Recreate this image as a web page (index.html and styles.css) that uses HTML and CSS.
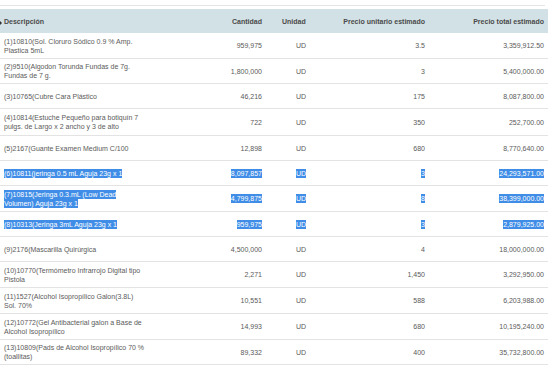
FILE: index.html
```html
<!DOCTYPE html>
<html lang="es">
<head>
<meta charset="utf-8">
<title>Tabla</title>
<link rel="stylesheet" href="styles.css">
</head>
<body>
<div class="wrap">
  <div class="topline"></div>
  <table class="grid">
    <colgroup>
      <col class="c-desc"><col class="c-cant"><col class="c-unid"><col class="c-pu"><col class="c-pt">
    </colgroup>
    <thead>
      <tr>
        <th class="desc"><span class="mark"></span>Descripción</th>
        <th class="num">Cantidad</th>
        <th class="unid">Unidad</th>
        <th class="num">Precio unitario estimado</th>
        <th class="num">Precio total estimado</th>
      </tr>
    </thead>
    <tbody>
      <tr class="h25"><td class="desc"><div class="dtext">(1)10810(Sol. Cloruro Sódico 0.9 % Amp. Plastica 5mL</div></td><td class="num">959,975</td><td class="unid">UD</td><td class="num">3.5</td><td class="num">3,359,912.50</td></tr>
      <tr><td class="desc"><div class="dtext">(2)9510(Algodon Torunda Fundas de 7g. Fundas de 7 g.</div></td><td class="num">1,800,000</td><td class="unid">UD</td><td class="num">3</td><td class="num">5,400,000.00</td></tr>
      <tr><td class="desc"><div class="dtext">(3)10765(Cubre Cara Plástico</div></td><td class="num">46,216</td><td class="unid">UD</td><td class="num">175</td><td class="num">8,087,800.00</td></tr>
      <tr class="h26"><td class="desc"><div class="dtext">(4)10814(Estuche Pequeño para botiquín 7 pulgs. de Largo x 2 ancho y 3 de alto</div></td><td class="num">722</td><td class="unid">UD</td><td class="num">350</td><td class="num">252,700.00</td></tr>
      <tr><td class="desc"><div class="dtext">(5)2167(Guante Examen Medium C/100</div></td><td class="num">12,898</td><td class="unid">UD</td><td class="num">680</td><td class="num">8,770,640.00</td></tr>
      <tr><td class="desc"><div class="dtext"><span class="hl">(6)10811(jeringa 0.5 mL Aguja 23g x 1</span></div></td><td class="num"><span class="hl">8,097,857</span></td><td class="unid"><span class="hl">UD</span></td><td class="num"><span class="hl">3</span></td><td class="num"><span class="hl">24,293,571.00</span></td></tr>
      <tr class="h25"><td class="desc"><div class="dtext"><span class="hl">(7)10815(Jeringa 0.3.mL (Low Dead Volumen) Aguja 23g x 1</span></div></td><td class="num"><span class="hl">4,799,875</span></td><td class="unid"><span class="hl">UD</span></td><td class="num"><span class="hl">8</span></td><td class="num"><span class="hl">38,399,000.00</span></td></tr>
      <tr><td class="desc"><div class="dtext"><span class="hl">(8)10313(Jeringa 3mL Aguja 23g x 1</span></div></td><td class="num"><span class="hl">959,975</span></td><td class="unid"><span class="hl">UD</span></td><td class="num"><span class="hl">3</span></td><td class="num"><span class="hl">2,879,925.00</span></td></tr>
      <tr><td class="desc"><div class="dtext">(9)2176(Mascarilla Quirúrgica</div></td><td class="num">4,500,000</td><td class="unid">UD</td><td class="num">4</td><td class="num">18,000,000.00</td></tr>
      <tr class="h25"><td class="desc"><div class="dtext">(10)10770(Termómetro Infrarrojo Digital tipo Pistola</div></td><td class="num">2,271</td><td class="unid">UD</td><td class="num">1,450</td><td class="num">3,292,950.00</td></tr>
      <tr class="h25"><td class="desc"><div class="dtext">(11)1527(Alcohol Isopropílico Galon(3.8L) Sol. 70%</div></td><td class="num">10,551</td><td class="unid">UD</td><td class="num">588</td><td class="num">6,203,988.00</td></tr>
      <tr class="h25"><td class="desc"><div class="dtext">(12)10772(Gel Antibacterial galon a Base de Alcohol Isopropílico</div></td><td class="num">14,993</td><td class="unid">UD</td><td class="num">680</td><td class="num">10,195,240.00</td></tr>
      <tr><td class="desc"><div class="dtext">(13)10809(Pads de Alcohol Isopropílico 70 % (toallitas)</div></td><td class="num">89,332</td><td class="unid">UD</td><td class="num">400</td><td class="num">35,732,800.00</td></tr>
    </tbody>
  </table>
</div>
</body>
</html>
```

FILE: styles.css
```css
html, body {
  margin: 0;
  padding: 0;
  background: #ffffff;
}

.wrap {
  width: 548px;
  padding-top: 5px;
  font-family: "Liberation Sans", Arial, sans-serif;
  font-size: 7px;
  color: #5a5a5a;
}

.topline {
  height: 0;
  border-top: 1px solid #e4e4e4;
  margin: 0 3px 3px 0;
}

.grid {
  width: 548px;
  border-collapse: collapse;
  table-layout: fixed;
}

.c-desc { width: 200px; }
.c-cant { width: 66px; }
.c-unid { width: 60px; }
.c-pu { width: 103px; }
.c-pt { width: 119px; }

.grid th {
  height: 24px;
  padding: 0 4px;
  background: #d2e1e5;
  color: #4a4a4a;
  font-weight: bold;
  text-align: left;
  vertical-align: middle;
  line-height: 9px;
}

.grid td {
  height: 24px;
  padding: 0 4px;
  border-bottom: 1px solid #e3e3e3;
  vertical-align: middle;
  line-height: 9px;
}

.grid tr.h25 td {
  height: 25px;
}

.grid tr.h26 td {
  height: 26px;
}

.grid th.desc {
  padding-left: 0;
}

.mark {
  display: inline-block;
  width: 0;
  height: 0;
  border-top: 2px solid transparent;
  border-bottom: 2px solid transparent;
  border-left: 2px solid #333333;
  margin-right: 2px;
  vertical-align: -1px;
}

.dtext {
  width: 142px;
}

.grid .num {
  text-align: right;
}

.grid th.unid {
  padding-left: 16px;
}

.grid td.unid {
  padding-left: 30px;
}

.hl {
  background: #3f8de6;
  color: #ffffff;
  padding: 1px 0;
}
```
